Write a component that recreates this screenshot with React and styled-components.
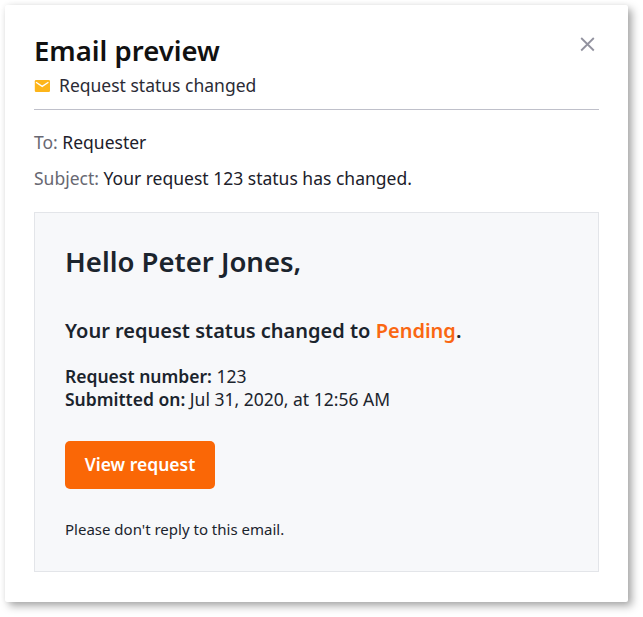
import React from 'react';
import styled, { createGlobalStyle } from 'styled-components';

const Global = createGlobalStyle`
  *{box-sizing:border-box}
  body{margin:0;background:#fff;font-family:"Noto Sans",sans-serif;overflow:hidden}
  h1,h2,p{margin:0}
`;
const Page = styled.div`padding:5px 0 0 5px;height:617px;`;
const Dialog = styled.main`
  width:623px;height:597px;background:#fff;border-radius:2px;padding:28px 29px 0;
  box-shadow:4px 4px 9px rgba(0,0,0,.34),0 0 5px rgba(0,0,0,.05);color:#1b242d;
`;
const Header = styled.header`height:77px;border-bottom:1px solid #bfc0ca;`;
const TitleRow = styled.div`display:flex;justify-content:space-between;`;
const Title = styled.h1`font-size:27.5px;line-height:36px;font-weight:600;color:#111;`;
const Close = styled.button`width:15px;height:15px;margin:4px 4px 0 0;padding:0;border:0;background:none;svg{display:block}`;
const Notice = styled.div`
  display:flex;align-items:flex-start;gap:9px;height:24px;margin-top:4px;font-size:17.5px;line-height:24px;color:#2b2b35;
  svg{margin-top:7px}
`;
const Meta = styled.p`font-size:17.5px;line-height:24px;margin-top:${p => p.$gap}px;color:#20202a;`;
const Label = styled.span`color:#686872;`;
const Message = styled.section`
  margin-top:22px;height:360px;background:#f7f8fa;border:1px solid #e3e5e9;padding:30px;
`;
const Greeting = styled.h2`font-size:27.5px;line-height:38px;font-weight:600;`;
const Status = styled.p`font-size:20px;line-height:28px;font-weight:600;margin-top:36px;span{color:#fa6712}`;
const Details = styled.div`margin-top:20px;font-size:17.5px;line-height:23px;b{font-weight:600}`;
const Action = styled.button`
  display:block;width:150px;height:48px;margin-top:30px;border:0;border-radius:5px;background:#fa6706;padding:0 0 2px;
  color:#fff;font:600 17.5px/24px "Noto Sans",sans-serif;
`;
const Footnote = styled.p`margin-top:30px;font-size:15px;line-height:20px;`;

export default function App() {
  return <><Global /><Page><Dialog>
    <Header>
      <TitleRow><Title>Email preview</Title>
        <Close aria-label="Close"><svg width="15" height="15" viewBox="0 0 15 15"><path d="M1.2 1L13.8 13.5M13.8 1L1.2 13.5" stroke="#92929f" strokeWidth="1.8" fill="none" /></svg></Close>
      </TitleRow>
      <Notice><svg width="16" height="12" viewBox="0 0 16 12"><rect x=".8" width="15.2" height="12" rx="1.2" fill="#fdb51a" /><path d="M2 2.2L8.2 6.4L14.4 2.2" stroke="#fff" strokeWidth="1.3" fill="none" /></svg><span>Request status changed</span></Notice>
    </Header>
    <Meta $gap={20}><Label>To:</Label> Requester</Meta>
    <Meta $gap={12}><Label>Subject:</Label> Your request 123 status has changed.</Meta>
    <Message>
      <Greeting>Hello Peter Jones,</Greeting>
      <Status>Your request status changed to <span>Pending</span>.</Status>
      <Details><p><b>Request number:</b> 123</p><p><b>Submitted on:</b> Jul 31, 2020, at 12:56 AM</p></Details>
      <Action>View request</Action>
      <Footnote>Please don't reply to this email.</Footnote>
    </Message>
  </Dialog></Page></>;
}
